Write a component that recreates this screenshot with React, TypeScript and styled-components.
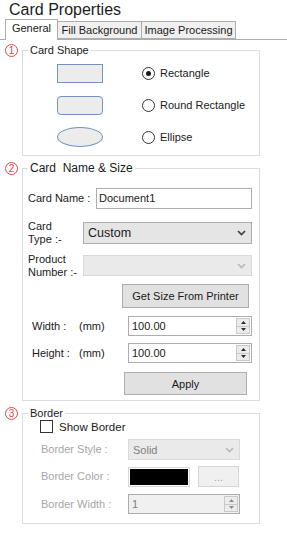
import styled, { createGlobalStyle } from "styled-components";

const GlobalStyle = createGlobalStyle`
  html, body {
    margin: 0;
    padding: 0;
    background: #ffffff;
  }
  body {
    font-family: "Liberation Sans", Arial, sans-serif;
    font-size: 11px;
    color: #1a1a1a;
  }
  * {
    box-sizing: border-box;
  }
`;

const shapeOptions = [
  { label: "Rectangle", kind: "rect", checked: true },
  { label: "Round Rectangle", kind: "round", checked: false },
  { label: "Ellipse", kind: "ellipse", checked: false },
];

const tabs = [
  { label: "General", width: 53, active: true },
  { label: "Fill Background", width: 85, active: false },
  { label: "Image Processing", width: 95, active: false },
];

function Chevron({ disabled }: { disabled?: boolean }) {
  return (
    <svg width="9" height="6" viewBox="0 0 9 6">
      <path
        d="M1 1 L4.5 4.5 L8 1"
        fill="none"
        stroke={disabled ? "#b8b8b8" : "#3c3c3c"}
        strokeWidth="1.6"
      />
    </svg>
  );
}

function Spinner({ disabled }: { disabled?: boolean }) {
  const c = disabled ? "#8c8c8c" : "#2c2c2c";
  return (
    <SpinBox>
      <SpinHalf>
        <svg width="5" height="3" viewBox="0 0 5 3">
          <path d="M0 3 L2.5 0 L5 3 Z" fill={c} />
        </svg>
      </SpinHalf>
      <SpinHalf>
        <svg width="5" height="3" viewBox="0 0 5 3">
          <path d="M0 0 L2.5 3 L5 0 Z" fill={c} />
        </svg>
      </SpinHalf>
    </SpinBox>
  );
}

export default function App() {
  return (
    <Page>
      <GlobalStyle />
      <Title>Card Properties</Title>
      <TabBar>
        {tabs.map((t) => (
          <Tab key={t.label} $active={t.active} $w={t.width}>
            {t.label}
          </Tab>
        ))}
      </TabBar>

      <Sections>
        {/* 1 - card shape */}
        <Section>
          <Badge>1</Badge>
          <Group>
            <Legend>Card Shape</Legend>
            <GroupBody $pad="0 0 2px 0">
              {shapeOptions.map((o) => (
                <ShapeRow key={o.kind}>
                  <ShapePreview $kind={o.kind} />
                  <RadioLabel>
                    <Radio $checked={o.checked} />
                    {o.label}
                  </RadioLabel>
                </ShapeRow>
              ))}
            </GroupBody>
          </Group>
        </Section>

        {/* 2 - name & size */}
        <Section>
          <Badge>2</Badge>
          <Group>
            <Legend $big>Card&nbsp; Name &amp; Size</Legend>
            <GroupBody $pad="0 7px 5px 5px">
              <FormRow $top={13}>
                <FieldLabel $w={68}>Card Name :</FieldLabel>
                <TextBox $w={157} $h={21}>Document1</TextBox>
              </FormRow>
              <FormRow $top={13}>
                <FieldLabel $w={55} $twoLine>
                  Card
                  <br />
                  Type :-
                </FieldLabel>
                <ComboBox $w={170} $h={22}>
                  <ComboText $big>Custom</ComboText>
                  <Chevron />
                </ComboBox>
              </FormRow>
              <FormRow $top={11}>
                <FieldLabel $w={55} $twoLine>
                  Product
                  <br />
                  Number :-
                </FieldLabel>
                <ComboBox $w={170} $h={21} $disabled>
                  <ComboText />
                  <Chevron disabled />
                </ComboBox>
              </FormRow>
              <FormRow $top={8} $indent={94}>
                <Button $w={127} $h={24}>Get Size From Printer</Button>
              </FormRow>
              <FormRow $top={8} $indent={4}>
                <FieldLabel $w={47}>Width :</FieldLabel>
                <FieldLabel $w={49}>(mm)</FieldLabel>
                <SpinField $w={125} $h={20}>
                  <SpinText>100.00</SpinText>
                  <Spinner />
                </SpinField>
              </FormRow>
              <FormRow $top={7} $indent={4}>
                <FieldLabel $w={47}>Height :</FieldLabel>
                <FieldLabel $w={49}>(mm)</FieldLabel>
                <SpinField $w={125} $h={20}>
                  <SpinText>100.00</SpinText>
                  <Spinner />
                </SpinField>
              </FormRow>
              <FormRow $top={9} $indent={96}>
                <Button $w={123} $h={23}>Apply</Button>
              </FormRow>
            </GroupBody>
          </Group>
        </Section>

        {/* 3 - border */}
        <Section>
          <Badge>3</Badge>
          <Group>
            <Legend>Border</Legend>
            <GroupBody $pad="0 0 9px 17px">
              <FormRow $top={0}>
                <CheckLabel>
                  <CheckBox />
                  Show Border
                </CheckLabel>
              </FormRow>
              <FormRow $top={6} $indent={1}>
                <FieldLabel $w={87} $muted>Border Style :</FieldLabel>
                <ComboBox $w={112} $h={21} $disabled>
                  <ComboText $muted>Solid</ComboText>
                  <Chevron disabled />
                </ComboBox>
              </FormRow>
              <FormRow $top={6} $indent={1}>
                <FieldLabel $w={87} $muted>Border Color :</FieldLabel>
                <Swatch />
                <Button $w={41} $h={21} $disabled>...</Button>
              </FormRow>
              <FormRow $top={7} $indent={1}>
                <FieldLabel $w={87} $muted>Border Width :</FieldLabel>
                <SpinField $w={112} $h={20} $disabled>
                  <SpinText $muted>1</SpinText>
                  <Spinner disabled />
                </SpinField>
              </FormRow>
            </GroupBody>
          </Group>
        </Section>
      </Sections>
    </Page>
  );
}

const Page = styled.div`
  width: 287px;
  height: 533px;
  overflow: hidden;
  background: #ffffff;
`;

const Title = styled.div`
  height: 20px;
  padding-left: 9px;
  font-size: 16px;
  line-height: 20px;
  color: #1c1c1c;
`;

const TabBar = styled.div`
  display: flex;
  align-items: flex-end;
  height: 20px;
  padding-left: 6px;
  border-bottom: 1px solid #acacac;
`;

const Tab = styled.div<{ $active?: boolean; $w: number }>`
  width: ${(p) => p.$w}px;
  height: ${(p) => (p.$active ? 21 : 18)}px;
  margin-bottom: ${(p) => (p.$active ? -1 : 0)}px;
  margin-left: -1px;
  border: 1px solid #acacac;
  border-bottom: ${(p) => (p.$active ? "none" : "1px solid #acacac")};
  background: ${(p) => (p.$active ? "#ffffff" : "#f0f0f0")};
  font-size: 11px;
  line-height: ${(p) => (p.$active ? 17 : 16)}px;
  text-align: center;
  color: #1a1a1a;
  white-space: nowrap;
  z-index: ${(p) => (p.$active ? 1 : 0)};
`;

const Sections = styled.div`
  display: flex;
  flex-direction: column;
  gap: 5px;
  padding-top: 3px;
`;

const Section = styled.div`
  display: flex;
  align-items: flex-start;
  gap: 4px;
  padding-left: 5px;
`;

const Badge = styled.div`
  width: 13px;
  height: 13px;
  margin-top: 1px;
  border: 1px solid #e0454b;
  border-radius: 50%;
  color: #e0454b;
  font-size: 10px;
  line-height: 11px;
  text-align: center;
`;

const Group = styled.fieldset`
  width: 238px;
  min-width: 0;
  margin: 0;
  padding: 0;
  border: 1px solid #dcdcdc;
`;

const GroupBody = styled.div<{ $pad: string }>`
  padding: ${(p) => p.$pad};
`;

const Legend = styled.legend<{ $big?: boolean }>`
  margin-left: 5px;
  padding: 0 2px;
  font-size: ${(p) => (p.$big ? 12 : 11)}px;
  line-height: 14px;
  color: #1a1a1a;
`;

const ShapeRow = styled.div`
  display: flex;
  align-items: center;
  height: 32px;
  padding-left: 34px;
`;

const ShapePreview = styled.div<{ $kind: string }>`
  width: 46px;
  height: ${(p) => (p.$kind === "ellipse" ? 20 : 19)}px;
  border: 1px solid #7393bb;
  background: #ececec;
  border-radius: ${(p) =>
    p.$kind === "ellipse" ? "50%" : p.$kind === "round" ? "4px" : "0"};
`;

const RadioLabel = styled.div`
  display: flex;
  align-items: center;
  gap: 5px;
  margin-left: 39px;
`;

const Radio = styled.span<{ $checked?: boolean }>`
  position: relative;
  width: 13px;
  height: 13px;
  border: 1px solid #333333;
  border-radius: 50%;
  background: #ffffff;
  &::after {
    content: "";
    display: ${(p) => (p.$checked ? "block" : "none")};
    position: absolute;
    left: 3px;
    top: 3px;
    width: 5px;
    height: 5px;
    border-radius: 50%;
    background: #1a1a1a;
  }
`;

const FormRow = styled.div<{ $top: number; $indent?: number }>`
  display: flex;
  align-items: center;
  margin-top: ${(p) => p.$top}px;
  padding-left: ${(p) => p.$indent ?? 0}px;
`;

const FieldLabel = styled.div<{
  $w: number;
  $twoLine?: boolean;
  $muted?: boolean;
}>`
  flex: 0 0 ${(p) => p.$w}px;
  font-size: 11px;
  line-height: 13px;
  margin: ${(p) => (p.$twoLine ? "-3px 0" : "0")};
  color: ${(p) => (p.$muted ? "#a6a6a6" : "#1a1a1a")};
  white-space: nowrap;
`;

const TextBox = styled.div<{ $w: number; $h: number }>`
  width: ${(p) => p.$w}px;
  height: ${(p) => p.$h}px;
  padding: 0 2px;
  border: 1px solid #abadb3;
  background: #ffffff;
  line-height: ${(p) => p.$h - 2}px;
`;

const ComboBox = styled.div<{ $w: number; $h: number; $disabled?: boolean }>`
  display: flex;
  align-items: center;
  justify-content: space-between;
  width: ${(p) => p.$w}px;
  height: ${(p) => p.$h}px;
  padding: 0 5px 0 4px;
  border: 1px solid ${(p) => (p.$disabled ? "#d9d9d9" : "#acacac")};
  background: ${(p) => (p.$disabled ? "#eaeaea" : "#e5e5e5")};
`;

const ComboText = styled.span<{ $big?: boolean; $muted?: boolean }>`
  font-size: ${(p) => (p.$big ? 12.5 : 11)}px;
  color: ${(p) => (p.$muted ? "#7f7f7f" : "#1a1a1a")};
`;

const Button = styled.div<{ $w: number; $h: number; $disabled?: boolean }>`
  display: flex;
  align-items: center;
  justify-content: center;
  width: ${(p) => p.$w}px;
  height: ${(p) => p.$h}px;
  border: 1px solid ${(p) => (p.$disabled ? "#d6d6d6" : "#adadad")};
  background: ${(p) => (p.$disabled ? "#f0f0f0" : "#e1e1e1")};
  color: ${(p) => (p.$disabled ? "#a6a6a6" : "#1a1a1a")};
  font-size: 11px;
`;

const SpinField = styled.div<{ $w: number; $h: number; $disabled?: boolean }>`
  display: flex;
  align-items: stretch;
  width: ${(p) => p.$w}px;
  height: ${(p) => p.$h}px;
  padding: 1px;
  border: 1px solid #abadb3;
  background: ${(p) => (p.$disabled ? "#f0f0f0" : "#ffffff")};
`;

const SpinText = styled.span<{ $muted?: boolean }>`
  flex: 1;
  padding-left: 2px;
  line-height: 16px;
  color: ${(p) => (p.$muted ? "#7f7f7f" : "#1a1a1a")};
`;

const SpinBox = styled.div`
  display: flex;
  flex-direction: column;
  width: 14px;
`;

const SpinHalf = styled.div`
  flex: 1;
  display: flex;
  align-items: center;
  justify-content: center;
  border: 1px solid #c9c9c9;
  background: #ececec;
  & + & {
    border-top: none;
  }
`;

const CheckLabel = styled.div`
  display: flex;
  align-items: center;
  gap: 6px;
  font-size: 11.5px;
`;

const CheckBox = styled.span`
  width: 13px;
  height: 13px;
  border: 1px solid #333333;
  background: #ffffff;
`;

const Swatch = styled.div`
  width: 62px;
  height: 20px;
  margin-right: 8px;
  border: 1px solid #d6d6d6;
  padding: 1px;
  background: #000000;
  background-clip: content-box;
`;
